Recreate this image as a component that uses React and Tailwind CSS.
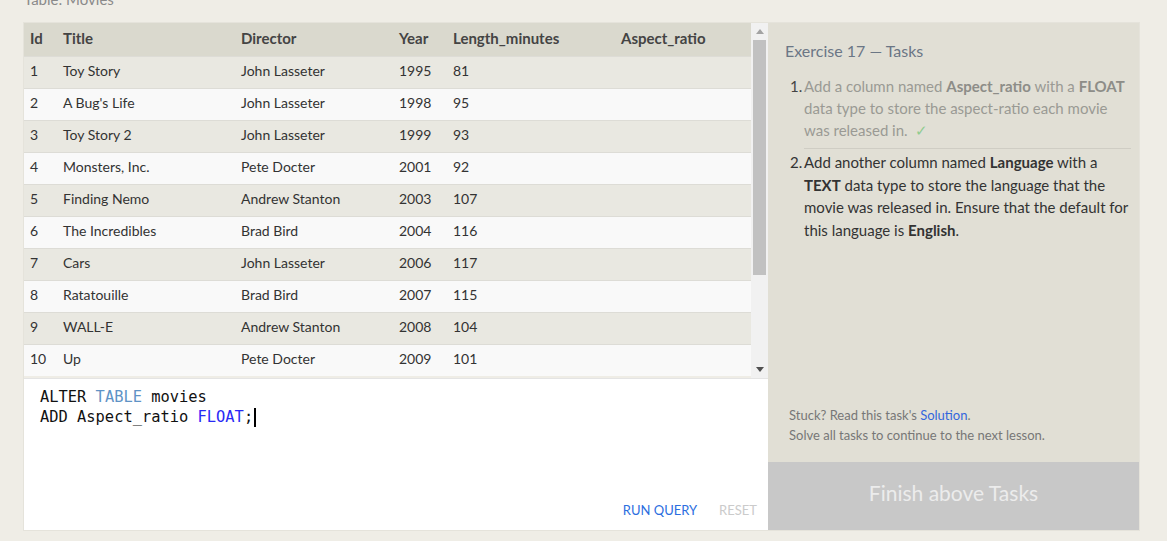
import React from "react";

const rows = [
  [1, "Toy Story", "John Lasseter", 1995, 81],
  [2, "A Bug's Life", "John Lasseter", 1998, 95],
  [3, "Toy Story 2", "John Lasseter", 1999, 93],
  [4, "Monsters, Inc.", "Pete Docter", 2001, 92],
  [5, "Finding Nemo", "Andrew Stanton", 2003, 107],
  [6, "The Incredibles", "Brad Bird", 2004, 116],
  [7, "Cars", "John Lasseter", 2006, 117],
  [8, "Ratatouille", "Brad Bird", 2007, 115],
  [9, "WALL-E", "Andrew Stanton", 2008, 104],
  [10, "Up", "Pete Docter", 2009, 101],
];

const font = { fontFamily: "Lato, 'Open Sans', sans-serif" };

function Row({ r, i }) {
  return (
    <div
      className={`flex h-[32px] items-center border-t border-[#dddcd6] pb-[4px] text-[14px] text-[#333] ${
        i % 2 === 0 ? "bg-[#e9e8e1]" : "bg-[#f9f9f9]"
      }`}
    >
      <div className="w-[33px] pl-[6px]">{r[0]}</div>
      <div className="w-[178px] pl-[6px]">{r[1]}</div>
      <div className="w-[158px] pl-[6px]">{r[2]}</div>
      <div className="w-[54px] pl-[6px]">{r[3]}</div>
      <div className="w-[168px] pl-[6px]">{r[4]}</div>
      <div className="flex-1 pl-[6px]"></div>
    </div>
  );
}

export default function App() {
  return (
    <div className="min-h-[541px] w-full overflow-hidden bg-[#efede6]" style={font}>
      <div className="-mt-[11px] h-[33px] pl-[24px] text-[15px] leading-[20px] text-[#8a8a8a]">
        Table: Movies
      </div>
      <div className="ml-[23px] flex w-[1117px] border border-[#e5e3db]">
        {/* left */}
        <div className="flex w-[744px] flex-col">
          <div className="flex h-[355px]">
            <div className="w-[727px]">
              <div className="flex h-[33px] items-center bg-[#dad9ce] pb-[2px] text-[15px] font-bold text-[#444]">
                <div className="w-[33px] pl-[6px]">Id</div>
                <div className="w-[178px] pl-[6px]">Title</div>
                <div className="w-[158px] pl-[6px]">Director</div>
                <div className="w-[54px] pl-[6px]">Year</div>
                <div className="w-[168px] pl-[6px]">Length_minutes</div>
                <div className="flex-1 pl-[6px]">Aspect_ratio</div>
              </div>
              {rows.map((r, i) => (
                <Row key={r[0]} r={r} i={i} />
              ))}
            </div>
            <div className="flex w-[17px] flex-col bg-[#f1f1f1]">
              <div className="flex h-[17px] items-center justify-center">
                <svg width="8" height="5" viewBox="0 0 8 5">
                  <path d="M0 5 L4 0 L8 5 Z" fill="#a3a3a3" />
                </svg>
              </div>
              <div className="mx-[2px] h-[235px] bg-[#c1c1c1]" />
              <div className="flex-1" />
              <div className="flex h-[17px] items-center justify-center">
                <svg width="8" height="5" viewBox="0 0 8 5">
                  <path d="M0 0 L8 0 L4 5 Z" fill="#505050" />
                </svg>
              </div>
            </div>
          </div>
          <div className="relative h-[152px] border-t border-[#e4e4e4] bg-white">
            <div
              className="pl-[16px] pt-[8px] text-[15.4px] leading-[20px] text-[#111]"
              style={{ fontFamily: "'DejaVu Sans Mono', monospace" }}
            >
              <div>
                ALTER <span className="text-[#5f93c6]">TABLE</span> movies
              </div>
              <div className="flex items-center">
                <span>
                  ADD Aspect_ratio <span className="text-[#2929f5]">FLOAT</span>;
                </span>
                <span className="ml-[1px] inline-block h-[19px] w-[2px] bg-black" />
              </div>
            </div>
            <div className="absolute bottom-[10px] right-[11px] flex gap-[22px] text-[13px]">
              <span className="text-[#2c6ee0]">RUN QUERY</span>
              <span className="text-[#cbcbcb]">RESET</span>
            </div>
          </div>
        </div>
        {/* right */}
        <div className="flex w-[371px] flex-col bg-[#e1dfd5]">
          <div className="flex-1 pl-[17px] pr-[8px] pt-[17px]">
            <div className="text-[16px] leading-[22px] text-[#6b7685]">Exercise 17 — Tasks</div>
            <ol className="mt-[13px] text-[15px] leading-[22px]">
              <li className="flex pb-[7px] text-[#9a9a94]">
                <span className="w-[19px] shrink-0 pl-[5px] text-[#444]">1.</span>
                <span>
                  Add a column named <b className="text-[#8d8d88]">Aspect_ratio</b> with a{" "}
                  <b className="text-[#8d8d88]">FLOAT</b> data type to store the aspect-ratio each movie
                  was released in. <span className="ml-[4px] text-[#90cc90]">✓</span>
                </span>
              </li>
              <li className="ml-[19px] border-t border-[#cfcdc4]" />
              <li className="flex pt-[2px] leading-[22.6px] text-[#333]">
                <span className="w-[19px] shrink-0 pl-[5px]">2.</span>
                <span>
                  Add another column named <b>Language</b> with a <b>TEXT</b> data type to store the
                  language that the movie was released in. Ensure that the default for this language is{" "}
                  <b>English</b>.
                </span>
              </li>
            </ol>
          </div>
          <div className="pb-[17px] pl-[21px] text-[13px] leading-[20px] text-[#777]">
            <div>
              Stuck? Read this task's <span className="text-[#3366dd]">Solution</span>.
            </div>
            <div>Solve all tasks to continue to the next lesson.</div>
          </div>
          <div className="flex h-[68px] items-center justify-center bg-[#c8c8c8] pb-[6px] text-[21px] text-[#ececec]">
            Finish above Tasks
          </div>
        </div>
      </div>
    </div>
  );
}
